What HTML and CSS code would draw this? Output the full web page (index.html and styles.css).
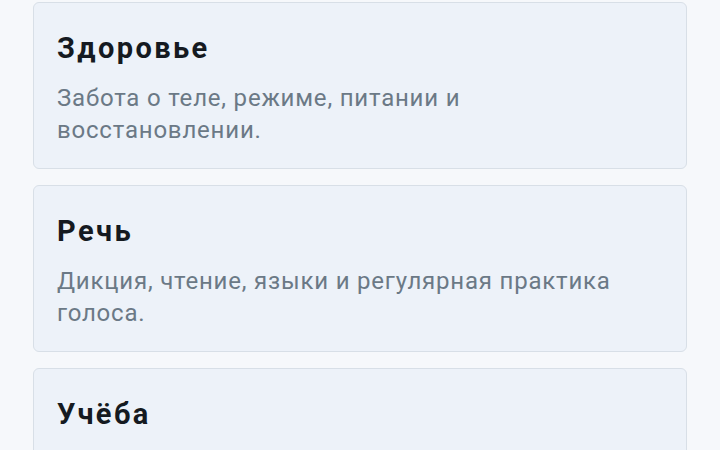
FILE: index.html
```html
<!DOCTYPE html>
<html lang="ru">
<head>
<meta charset="utf-8">
<link rel="stylesheet" href="styles.css">
</head>
<body>
<main class="list">
  <section class="card">
    <h2 class="card-title">Здоровье</h2>
    <p class="card-text">Забота о теле, режиме, питании и восстановлении.</p>
  </section>
  <section class="card">
    <h2 class="card-title">Речь</h2>
    <p class="card-text">Дикция, чтение, языки и регулярная практика голоса.</p>
  </section>
  <section class="card">
    <h2 class="card-title">Учёба</h2>
  </section>
</main>
</body>
</html>
```
FILE: styles.css
```css
html, body {
  margin: 0;
  padding: 0;
  background: #f6f8fb;
}
body {
  font-family: Roboto, "Noto Sans", sans-serif;
  overflow: hidden;
  height: 450px;
}
.list {
  display: flex;
  flex-direction: column;
  gap: 16px;
  padding: 2px 33px 0 33px;
}
.card {
  background: #edf2f9;
  border: 1px solid #d8dfe7;
  border-radius: 6px;
  padding: 29px 23px 22px 23px;
  height: 167px;
  box-sizing: border-box;
  flex-shrink: 0;
}
.card-title {
  margin: 0;
  font-size: 29px;
  line-height: 32px;
  font-weight: 700;
  letter-spacing: 2.4px;
  color: #151a21;
}
.card-text {
  margin: 18px 0 0 0;
  font-size: 24px;
  line-height: 32px;
  letter-spacing: 0.8px;
  color: #6b7986;
}
```
